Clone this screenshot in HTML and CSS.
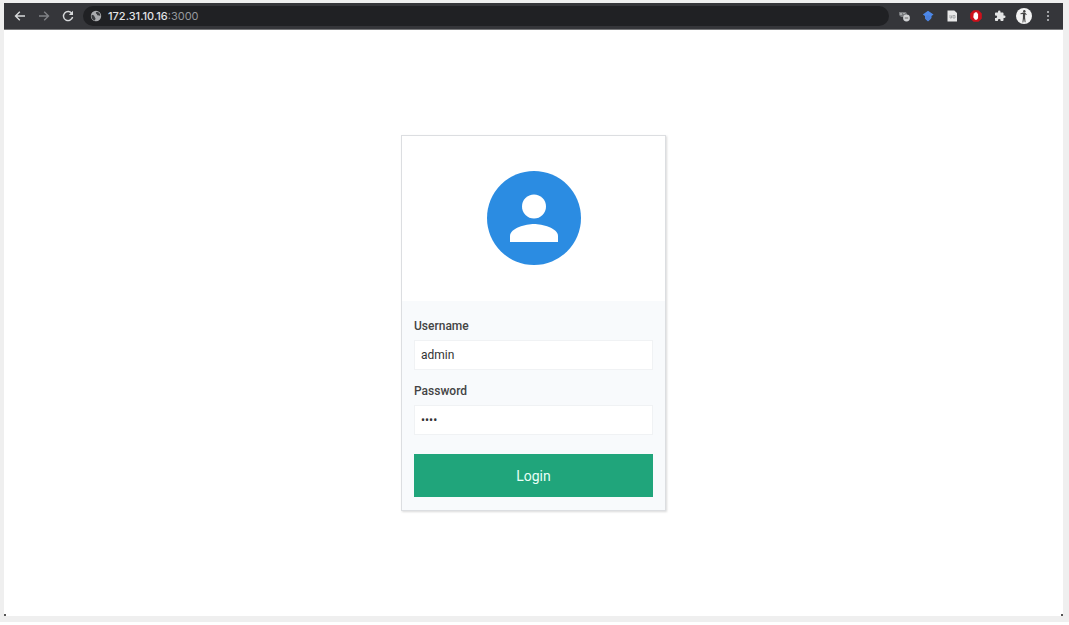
FILE: index.html
```html
<!DOCTYPE html>
<html lang="en">
  <head>
    <meta charset="UTF-8" />
    <meta name="viewport" content="width=device-width, initial-scale=1.0" />
    <title>Login</title>
    <link rel="stylesheet" href="styles.css">
  </head>
  <body>
    <div class="window">
      <header class="toolbar">
        <nav class="nav">
          <button type="button" class="tool" aria-label="Back">
            <svg viewBox="0 0 12 12" class="line"><path d="M11 6H1.5M5.8 1.7 1.5 6l4.300 4.300" /></svg>
          </button>
          <button type="button" class="tool dim" aria-label="Forward">
            <svg viewBox="0 0 12 12" class="line"><path d="M1 6h9.500M6.200 1.700 10.500 6l-4.300 4.300" /></svg>
          </button>
          <button type="button" class="tool" aria-label="Reload">
            <svg viewBox="0 0 12 12" class="line"><path d="M10 3.600A4.600 4.600 0 1 0 10.600 7" /><path class="solid" d="M11 .8v4.200H6.800z" /></svg>
          </button>
        </nav>
        <div class="address">
          <svg viewBox="0 0 12 12" class="globe"><circle cx="6" cy="6" r="5.200" fill="#a9abae" /><path fill="#3a3c3f" d="M1.700 4.800c1.500.1 2.700.8 2.900 1.900.2.900 1 1 .9 2-.1.700-.6 1.100-.6 1.800C2.500 10 1 7.500 1.700 4.800zM6 2.200c1-.6 2.500-.3 3.300.7.700.8 1 1.800 1 2.900-1 .2-1.500-.6-2.500-.5-1 0-1.200-.8-.6-1.300C6.400 4 5.500 3.200 6 2.200z" /></svg>
          <span class="url">172.31.10.16<span class="port">:3000</span></span>
        </div>
        <div class="extensions">
          <button type="button" class="tool" aria-label="Tab capture">
            <svg viewBox="0 0 12 12"><path fill="#77797c" d="M1 2h7l1 2v3H3L1 5z" /><path fill="#a5a7a9" d="M2 3h2v2H2zM5 3h2v1H5z" /><circle cx="8.500" cy="8" r="3.400" fill="#d0d1d3" /><path d="M6.800 8h3.400" stroke="#666" /></svg>
          </button>
          <button type="button" class="tool" aria-label="Scholar">
            <svg viewBox="0 0 12 12"><path fill="#4d88e8" d="M6 .8 11.500 4.500 9.500 6v2L6 11.500 3 8.500V6L.8 4.500z" /><circle cx="6" cy="7.800" r="2.600" fill="#4a80dc" /></svg>
          </button>
          <button type="button" class="tool" aria-label="Notes">
            <svg viewBox="0 0 12 12"><path fill="#e8e8e8" d="M1.500.4h6.800L11 3v8.600H1.500z" /><path fill="none" stroke="#a6a8aa" d="M4 5v3h1.500V5.500M7 5.500h2V8H7V5" /></svg>
          </button>
          <button type="button" class="tool" aria-label="Content blocker">
            <svg viewBox="0 0 12 12"><path fill="#ce101b" d="M3.600.2h4.800l3.400 3.400v4.800l-3.400 3.400H3.600L.2 8.400V3.600z" /><path fill="#fff" d="M3.800 3.300h.9V2.500h.9v-.4h.8v.5h.8v.8h.9v4.200c0 1-.6 1.900-1.400 2.200H5L3.300 7.300z" /></svg>
          </button>
          <button type="button" class="tool" aria-label="Extensions">
            <svg viewBox="0 0 24 24"><path fill="#e2e3e4" d="M20.500 11H19V7c0-1.100-.9-2-2-2h-4V3.500a2.500 2.500 0 0 0-5 0V5H4c-1.100 0-2 .9-2 2v3.800h1.500a2.700 2.700 0 0 1 0 5.400H2V20c0 1.100.9 2 2 2h3.800v-1.500a2.700 2.700 0 0 1 5.400 0V22H17c1.100 0 2-.9 2-2v-4h1.500a2.500 2.500 0 0 0 0-5z" /></svg>
          </button>
          <button type="button" class="tool avatar" aria-label="Profile">
            <svg viewBox="0 0 16 16"><circle cx="8" cy="8" r="8" fill="#f3f3f3" /><circle cx="8.300" cy="3.200" r="1.200" fill="#444" /><path fill="#444" d="M4.300 5.500 7 4.500h2l1.800 1.900-.5.600L9.200 6.300l-.1 3.200.5 4.800H8.700L8 10.400l-.7 4.100h-.9l.5-4.800V6l-2.300.3z" /></svg>
          </button>
          <button type="button" class="tool" aria-label="Menu">
            <svg viewBox="0 0 12 12"><g fill="#c5c7ca"><circle cx="6" cy="2" r="1" /><circle cx="6" cy="6" r="1" /><circle cx="6" cy="10" r="1" /></g></svg>
          </button>
        </div>
      </header>
      <main class="page">
        <form class="card">
          <div class="card-top">
            <svg viewBox="0 0 94 94" class="user">
              <circle cx="47" cy="47" r="47" fill="#2b8ce2" />
              <circle cx="47" cy="35.500" r="12" fill="#fff" />
              <path fill="#fff" d="M23 71v-6c0-8 16-12 24-12s24 4 24 12v6z" />
            </svg>
          </div>
          <div class="card-body">
            <label for="username">Username</label>
            <input type="text" id="username" value="admin" />
            <label for="password">Password</label>
            <input type="password" id="password" value="pass" />
            <button type="submit" class="login">Login</button>
          </div>
        </form>
      </main>
    </div>
  </body>
</html>
```

FILE: styles.css
```css
* {
  box-sizing: border-box;
}
html {
  background-color: #fff;
}
body {
  margin: 0;
  height: calc(100vh - 3px);
  padding: 3px 6px 6px 4px;
  background-color: #efefef;
  font-family: Roboto, sans-serif;
}
.window {
  height: 100%;
  display: flex;
  flex-direction: column;
  /* dark specks in the bottom corners of the window */
  background:
    linear-gradient(#555, #555) left bottom / 2px 2px no-repeat,
    linear-gradient(#555, #555) right bottom / 2px 2px no-repeat,
    #fff;
}
.toolbar {
  display: flex;
  align-items: center;
  padding: 3px 9px 3px 10px;
  background-color: #35363a;
  border-bottom: 1px solid #77787a;
}
.nav,
.extensions {
  display: flex;
  align-items: center;
  gap: 12px;
}
.tool {
  width: 12px;
  height: 12px;
  padding: 0;
  border: none;
  background: none;
  color: #d8dadc;
}
.tool svg {
  display: block;
  width: 100%;
  height: 100%;
}
.dim {
  color: #808286;
}
.avatar {
  width: 16px;
  height: 16px;
  margin: 0 -2px;
}
.line {
  fill: none;
  stroke: currentColor;
  stroke-width: 1.4;
}
.line .solid {
  fill: currentColor;
  stroke: none;
}
.address {
  flex: 1;
  height: 20px;
  margin: 0 9px;
  padding: 0 7px;
  display: flex;
  align-items: center;
  gap: 6px;
  border-radius: 10px;
  background-color: #202124;
}
.globe {
  width: 12px;
  height: 12px;
}
.url {
  font-family: Inter, sans-serif;
  font-size: 11px;
  line-height: 20px;
  font-weight: 500;
  color: #e3e4e6;
}
.port {
  font-weight: 400;
  color: #96989c;
}
.page {
  flex: 1;
  display: flex;
  justify-content: center;
  align-items: center;
}
.card {
  width: 265px;
  border: 1px solid #dcdee1;
  background-color: #fff;
  box-shadow: 1px 1px 2px rgba(0, 0, 0, 0.15);
}
.card-top {
  padding: 35px 0 36px;
}
.user {
  display: block;
  width: 94px;
  height: 94px;
  margin: 0 auto;
}
.card-body {
  display: flex;
  flex-direction: column;
  padding: 17px 12px 13px;
  background-color: #f8fafc;
}
.card-body label {
  margin-bottom: 6px;
  font-size: 12px;
  line-height: 16px;
  font-weight: 500;
  color: #444;
}
.card-body input {
  height: 30px;
  margin: 0 0 13px;
  padding: 0 6px;
  border: 1px solid #f0f2f4;
  background-color: #fff;
  font-family: inherit;
  font-size: 12px;
  color: #333;
  outline: none;
}
.login {
  height: 43px;
  margin-top: 6px;
  border: none;
  background-color: #20a57b;
  color: #e9fff7;
  font-family: inherit;
  font-size: 14px;
  cursor: pointer;
}
```
